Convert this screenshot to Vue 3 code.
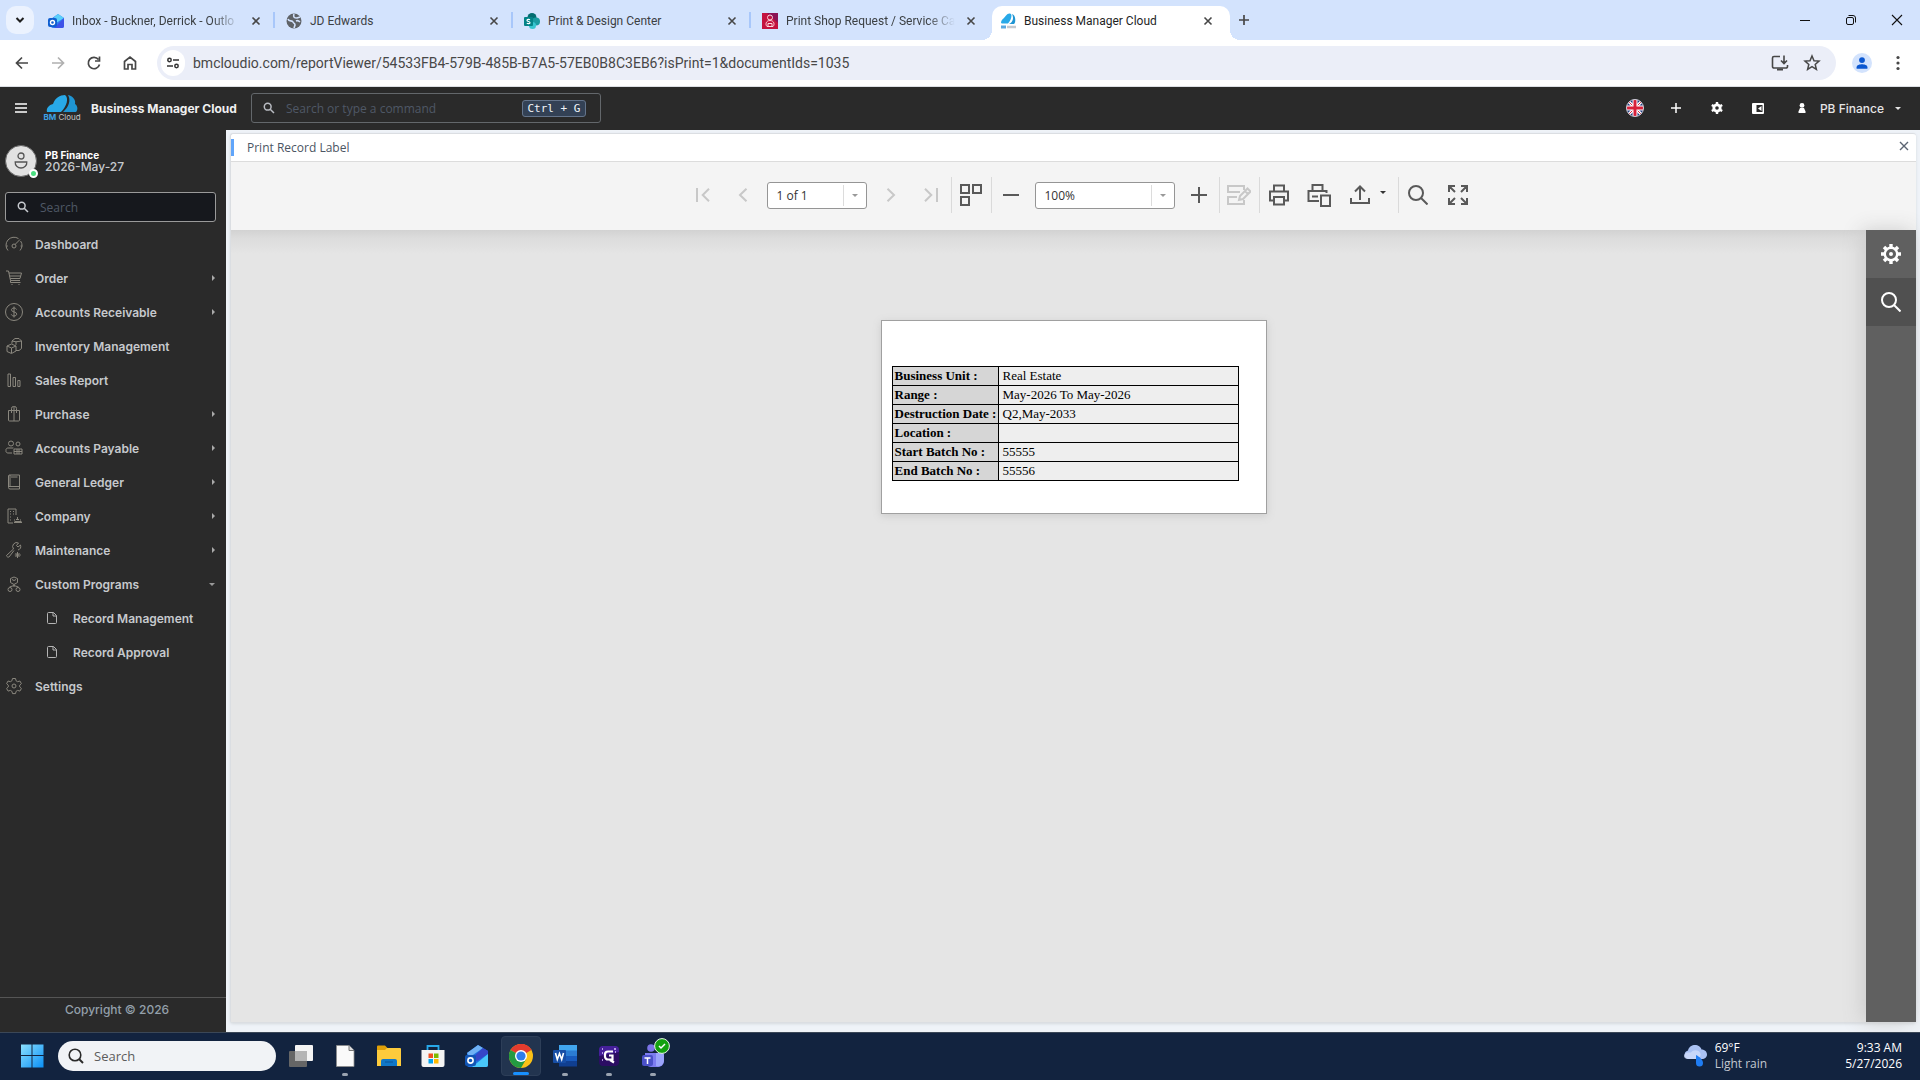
<!-- src/App.vue -->
<script setup>
import { ref } from 'vue'

const tabs = [
  { title: 'Inbox - Buckner, Derrick - Outlo', icon: 'outlook', long: true },
  { title: 'JD Edwards', icon: 'globe' },
  { title: 'Print & Design Center', icon: 'sharepoint' },
  { title: 'Print Shop Request / Service Ca', icon: 'shop', long: true },
  { title: 'Business Manager Cloud', icon: 'cloud', active: true },
]

const url = ref('bmcloudio.com/reportViewer/54533FB4-579B-485B-B7A5-57EB0B8C3EB6?isPrint=1&documentIds=1035')
const command = ref('')
const menuSearch = ref('')
const page = ref('1 of 1')
const zoom = ref('100%')
const taskSearch = ref('')
const customOpen = ref(true)

// menu icons are stroked on an 18x18 grid
const menu = [
  { name: 'Dashboard', d: 'M3 15.5A8 8 0 0 1 13.5 3.6M15.6 6A8 8 0 0 1 15 15.5M1.2 11h1.6M15.6 11h1.6M10 9.5L15 4.5M11 11a2 2 0 1 1-4 0a2 2 0 0 1 4 0' },
  { name: 'Order', arrow: true, d: 'M1 2h2.5l2 9.500h9.500M4 4h12.500l-1.500 5.500H5.200M4.500 7h11M5.500 11.500v2h10M6.500 15.500h1M13.500 15.500h1' },
  { name: 'Accounts Receivable', arrow: true, d: 'M17.500 9a8.500 8.500 0 1 1-17 0a8.500 8.500 0 0 1 17 0M11.500 6.500c-.4-1-1.300-1.500-2.500-1.500c-1.500 0-2.500.7-2.500 1.900c0 2.800 5.200 1.300 5.200 4.100c0 1.200-1 2-2.700 2c-1.400 0-2.400-.6-2.700-1.600M9 3.500v11' },
  { name: 'Inventory Management', d: 'M2 9l4.500-2L11 9v5l-4.500 2.500L2 14.500zM2 9l4.500 2L11 9M6.500 11v5M7 6.500V4l3-2.500h4L16.500 4v7.500L14 13.500h-3M7 4l4 .8L16.500 4M11 4.800v3' },
  { name: 'Sales Report', d: 'M3 3h2.500v12.500H3zM8 6.500h2.500v9H8zM12.800 9.500h2.200v6h-2.200z' },
  { name: 'Purchase', arrow: true, d: 'M3.500 5.500h11V15a1 1 0 0 1-1 1h-9a1 1 0 0 1-1-1zM6.500 8V3.500a2 2 0 0 1 2-2h1a2 2 0 0 1 2 2V8M9 1.500V16' },
  { name: 'Accounts Payable', arrow: true, d: 'M8.500 4.500a2.500 2.500 0 1 1-5 0a2.500 2.500 0 0 1 5 0M15 5a2 2 0 1 1-4 0a2 2 0 0 1 4 0M8.500 9H3a2 2 0 0 0-2 2.500A2 2 0 0 0 3 14h4M9 10h8v5H9zM12 10v5M14 10v5M9 12.500h8' },
  { name: 'General Ledger', arrow: true, d: 'M4 2h10.500v14H5a1.500 1.500 0 0 1-1.500-1.500V3zM6 4h6.500M3.500 13.500h11M5 2v11' },
  { name: 'Company', arrow: true, d: 'M8 16H3V2h8v6M5 4.500h1M8 4.500h1M5 7h1M8 7h1M5 10h1M5 13h1M12.500 10v2M9 13h1M15 13h1M11 12.500h3M9 15.500h8M9.500 14.500h7' },
  { name: 'Maintenance', arrow: true, d: 'M1.500 14.500L8.500 8a4 4 0 0 1 5-6l-2 2.500l1.500 1.500l2.500-2a4 4 0 0 1-2.500 5M9 9.500L4 16a1.800 1.800 0 0 1-2.500-1.500M12.500 11v6M9.800 14h6M10.500 12l4 4M14.500 12l-4 4' },
  { name: 'Custom Programs', open: true, d: 'M5.500 3.500L9 2l3.500 1.500v4L9 9.500L5.500 7.500zM7 4.500l2 1l2-1M9 9.500V12M4.500 12L9 10.500L13.500 12M7 14.500a2 2 0 1 1-4 0a2 2 0 0 1 4 0M15 14.500a2 2 0 1 1-4 0a2 2 0 0 1 4 0' },
]
const subMenu = ['Record Management', 'Record Approval']

const rows = [
  ['Business Unit :', 'Real Estate'],
  ['Range :', 'May-2026 To May-2026'],
  ['Destruction Date :', 'Q2,May-2033'],
  ['Location :', ''],
  ['Start Batch No :', '55555'],
  ['End Batch No :', '55556'],
]
</script>

<template>
  <div class="screen">
    <!-- Tab strip -->
    <header class="tab-strip">
      <button class="tab-search" aria-label="Search tabs">
        <svg width="10" height="10" viewBox="0 0 10 10"><path d="M1.500 3L5 6.500L8.500 3" fill="none" stroke="#1f1f1f" stroke-width="2" /></svg>
      </button>
      <div v-for="tab in tabs" :key="tab.title" class="tab" :class="{ active: tab.active }">
        <svg class="tab-icon" width="16" height="16" viewBox="0 0 16 16">
          <template v-if="tab.icon === 'outlook'">
            <path d="M3 6l7-5l6 4v8a2 2 0 0 1-2 2H5a2 2 0 0 1-2-2z" fill="#2f7df0" />
            <path d="M6 4l4-3l6 4l-8 5z" fill="#5bd0fb" /><path d="M16 5v8a2 2 0 0 1-2 2H6z" fill="#3d52e8" />
            <rect y="5" width="9" height="9" rx="2" fill="#0f5fd0" /><circle cx="4.500" cy="9.500" r="2" fill="none" stroke="#fff" stroke-width="1.400" />
          </template>
          <template v-else-if="tab.icon === 'globe'">
            <circle cx="8" cy="8" r="7.500" fill="#5f6368" />
            <path d="M2 6c1 3 4 1 5 3s2 1 2 3l-1 3M8 1c-1 3 0 4 3 4l3-1M10 8c2-1 3 0 4 1" fill="none" stroke="#d3e3fd" stroke-width="1.600" />
          </template>
          <template v-else-if="tab.icon === 'sharepoint'">
            <circle cx="8" cy="4.500" r="4.500" fill="#036c70" /><circle cx="12" cy="8.500" r="4" fill="#1a9ba1" /><circle cx="8.500" cy="12.500" r="3.500" fill="#37c6d0" />
            <rect y="4" width="9" height="9" rx="1" fill="#038387" />
            <path d="M6 6.800c-1-.7-3-.5-3 .6c0 1.400 3 .9 3 2.300c0 1.100-2 1.300-3.200.6" fill="none" stroke="#fff" stroke-width="1.200" />
          </template>
          <template v-else-if="tab.icon === 'shop'">
            <rect width="16" height="16" fill="#c4123f" /><path d="M5 0h11v10z" fill="#8b1254" />
            <g fill="none" stroke="#ffd5dc"><circle cx="8" cy="4.500" r="2.500" /><path d="M5 13.500c-2-2-1-6 3-6s5 4 3 6zM6 10.500h4v3H6z" /></g>
          </template>
          <template v-else>
            <path d="M1 10c0-3 2-4 3-5s3-5 6-4.500s1 7-2 10H2z" fill="#28a9e8" /><path d="M9 11c4-2 5-6 3-10c4 1 4 9 2 10z" fill="#1f95d3" />
            <path d="M1 14h5" stroke="#59a9e0" stroke-width="3" /><path d="M7 14h9" stroke="#c5c9ce" stroke-width="2.500" />
          </template>
        </svg>
        <span class="tab-title" :class="{ fade: tab.long }">{{ tab.title }}</span>
        <button class="tab-close" aria-label="Close tab">
          <svg width="10" height="10" viewBox="0 0 10 10"><path d="M1.500 1.500l7 7M8.500 1.500l-7 7" stroke="currentColor" stroke-width="1.600" /></svg>
        </button>
      </div>
      <button class="new-tab" aria-label="New tab">
        <svg width="12" height="12" viewBox="0 0 12 12"><path d="M6 1v10M1 6h10" stroke="#474747" stroke-width="1.700" /></svg>
      </button>
      <div class="window-buttons">
        <button aria-label="Minimize"><svg width="12" height="12" viewBox="0 0 12 12"><path d="M1 6.500h10" stroke="#111" /></svg></button>
        <button aria-label="Restore"><svg width="12" height="12" viewBox="0 0 12 12" fill="none" stroke="#111"><rect x="1.500" y="3.500" width="7" height="7" rx="1.500" /><path d="M3.500 1.500H8a2.500 2.500 0 0 1 2.500 2.500v4.500" /></svg></button>
        <button aria-label="Close"><svg width="12" height="12" viewBox="0 0 12 12"><path d="M1 1l10 10M11 1L1 11" stroke="#111" stroke-width="1.100" /></svg></button>
      </div>
    </header>

    <!-- Address bar -->
    <div class="address-row">
      <div class="nav-buttons">
        <button aria-label="Back"><svg width="16" height="16" viewBox="0 0 16 16"><path d="M14 8H2.500M8 2.500L2.500 8L8 13.500" /></svg></button>
        <button aria-label="Forward" class="off"><svg width="16" height="16" viewBox="0 0 16 16"><path d="M2 8h11.500M8 2.500L13.500 8L8 13.500" /></svg></button>
        <button aria-label="Reload"><svg width="16" height="16" viewBox="0 0 16 16"><path d="M13.500 9.500A5.700 5.700 0 1 1 12.500 4.500M13.500 1.500v4.500H9" /></svg></button>
        <button aria-label="Home"><svg width="16" height="16" viewBox="0 0 16 16"><path d="M2.500 14V6.500L8 2l5.500 4.500V14H10V9.500H6V14z" /></svg></button>
      </div>
      <div class="omnibox">
        <button class="site-info" aria-label="Site information">
          <svg width="14" height="14" viewBox="0 0 14 14" fill="none" stroke="#333" stroke-width="1.500"><circle cx="3.500" cy="4" r="1.700" /><path d="M7 4h6M1 10h6" /><circle cx="10.500" cy="10" r="1.700" /></svg>
        </button>
        <input v-model="url" class="url" type="text" aria-label="Address" />
        <button aria-label="Install"><svg width="18" height="18" viewBox="0 0 18 18" fill="none" stroke="#474747" stroke-width="1.600"><path d="M9 2.500H3a1.500 1.500 0 0 0-1.500 1.500v8.500A1.500 1.500 0 0 0 3 14h12a1.500 1.500 0 0 0 1.500-1.500V11M13 1.500v7.500M10 6.500l3 3l3-3" /><path d="M6 15.500h6" stroke-width="2" /></svg></button>
        <button aria-label="Bookmark"><svg width="18" height="18" viewBox="0 0 18 18" fill="none" stroke="#474747" stroke-width="1.500"><path d="M9 2l2 4.700l5 .4l-3.800 3.300l1.200 5L9 12.700l-4.400 2.700l1.200-5L2 7.100l5-.4z" /></svg></button>
      </div>
      <button class="profile" aria-label="Profile"><svg width="20" height="20" viewBox="0 0 24 24"><circle cx="12" cy="12" r="12" fill="#d3e3fd" /><circle cx="12" cy="8.500" r="3.500" fill="#0b57d0" /><path d="M5.500 19v-2c0-2.500 4-3.500 6.500-3.500s6.500 1 6.500 3.500v2z" fill="#0b57d0" /></svg></button>
      <button class="dots" aria-label="Menu"><svg width="4" height="16" viewBox="0 0 4 16" fill="#474747"><circle cx="2" cy="2.500" r="1.600" /><circle cx="2" cy="8" r="1.600" /><circle cx="2" cy="13.500" r="1.600" /></svg></button>
    </div>

    <!-- App header -->
    <div class="app-header">
      <button class="burger" aria-label="Toggle menu"><svg width="12" height="10" viewBox="0 0 12 10"><path d="M0 1h12M0 5h12M0 9h12" stroke="#fff" stroke-width="1.700" /></svg></button>
      <div class="logo">
        <svg width="32" height="18" viewBox="0 0 32 18"><path d="M1 17C0 13 3 10 7 9C9 3 14 0 19 0C23 3 21 11 15 17z" fill="#28a9e8" /><path d="M22 0c5 1 8 5 7 9c3 2 3 6 1 8H17C23 12 25 5 22 0z" fill="#1f95d3" /></svg>
        <span><b>BM</b> Cloud</span>
      </div>
      <strong class="brand">Business Manager Cloud</strong>
      <label class="command">
        <svg width="12" height="12" viewBox="0 0 12 12" fill="none" stroke="#b9bcc2" stroke-width="1.500"><circle cx="4.700" cy="4.700" r="3.400" /><path d="M7.200 7.200L11 11" /></svg>
        <input v-model="command" type="text" placeholder="Search or type a command" aria-label="Command" />
        <kbd>Ctrl + G</kbd>
      </label>
      <div class="header-actions">
        <button aria-label="Language">
          <svg width="18" height="18" viewBox="0 0 18 18">
            <defs><clipPath id="flagRound"><circle cx="9" cy="9" r="8.500" /></clipPath></defs>
            <g clip-path="url(#flagRound)"><rect width="18" height="18" fill="#233a80" /><path d="M0 0l18 18M18 0L0 18" stroke="#fff" stroke-width="3" /><path d="M0 0l18 18M18 0L0 18" stroke="#d22b40" stroke-width="1" /><path d="M9 0v18M0 9h18" stroke="#fff" stroke-width="5" /><path d="M9 0v18M0 9h18" stroke="#d8203a" stroke-width="3" /></g>
            <circle cx="9" cy="9" r="8.500" fill="none" stroke="#c9ccd6" />
          </svg>
        </button>
        <button aria-label="Add"><svg width="10" height="10" viewBox="0 0 10 10"><path d="M5 0v10M0 5h10" stroke="#fff" stroke-width="1.500" /></svg></button>
        <button aria-label="Settings"><svg width="12" height="12" viewBox="0 0 12 12"><circle cx="6" cy="6" r="3.200" fill="none" stroke="#fff" stroke-width="2.800" /><path d="M6 0v2.500M6 9.500V12M.8 3l2.200 1.300M9 7.700L11.200 9M.8 9L3 7.700M9 4.300L11.200 3" stroke="#fff" stroke-width="2.400" /></svg></button>
        <button aria-label="Panel"><svg width="12" height="11" viewBox="0 0 12 11"><rect width="12" height="11" rx="1" fill="#fff" /><rect x="4.500" y="2" width="6" height="7" fill="#2a2a2a" /><path d="M9.500 3v5L6 5.500z" fill="#fff" /></svg></button>
        <button class="user">
          <svg width="8" height="10" viewBox="0 0 8 10" fill="#fff"><circle cx="4" cy="2.400" r="2.400" /><path d="M.5 10V8.500L2 5h4l1.500 3.500V10z" /></svg>
          <span>PB Finance</span>
          <i class="caret-down"></i>
        </button>
      </div>
    </div>

    <div class="body">
      <!-- Side menu -->
      <aside class="sidebar">
        <div class="who">
          <div class="avatar">
            <svg width="14" height="18" viewBox="0 0 14 18" fill="none" stroke="#555" stroke-width="1.300"><circle cx="7" cy="4" r="3" /><path d="M1.200 10h11.600c.3 3.500-2.500 6-5.800 6s-6.100-2.500-5.800-6z" /></svg>
            <i class="online"></i>
          </div>
          <div class="who-text">
            <b>PB Finance</b>
            <span>2026-May-27</span>
          </div>
        </div>
        <label class="menu-search">
          <svg width="12" height="12" viewBox="0 0 12 12" fill="none" stroke="#c9ccd1" stroke-width="1.500"><circle cx="4.700" cy="4.700" r="3.400" /><path d="M7.200 7.200L11 11" /></svg>
          <input v-model="menuSearch" type="text" placeholder="Search" aria-label="Search menu" />
        </label>
        <nav>
          <a v-for="item in menu" :key="item.name" href="#" @click.prevent="item.open && (customOpen = !customOpen)">
            <svg class="menu-icon" width="18" height="18" viewBox="0 0 18 18"><path :d="item.d" /></svg>
            <span>{{ item.name }}</span>
            <i v-if="item.arrow" class="caret-right"></i>
            <i v-if="item.open" class="caret-down"></i>
          </a>
          <template v-if="customOpen">
            <a v-for="name in subMenu" :key="name" href="#" class="sub" @click.prevent>
              <svg width="10" height="12" viewBox="0 0 10 12" fill="none" stroke="#b5b5b5"><path d="M.5 1.500a1 1 0 0 1 1-1h5l3 3v7a1 1 0 0 1-1 1h-7a1 1 0 0 1-1-1zM6 .5v3.500h3.500" /></svg>
              <span>{{ name }}</span>
            </a>
          </template>
          <a href="#" @click.prevent>
            <svg class="menu-icon" width="18" height="18" viewBox="0 0 18 18"><path d="M7.500 1.500h3l.6 2.300l1.500.9l2.300-.7l1.500 2.600l-1.700 1.600v1.700l1.700 1.600l-1.500 2.600l-2.300-.7l-1.500.9l-.6 2.300h-3l-.6-2.300l-1.500-.9l-2.300.7l-1.500-2.600l1.700-1.600V8.200L1.600 6.600L3.100 4l2.300.7l1.500-.9zM11 9a2 2 0 1 1-4 0a2 2 0 0 1 4 0" /></svg>
            <span>Settings</span>
          </a>
        </nav>
        <footer>Copyright © 2026</footer>
      </aside>

      <!-- Report -->
      <main class="content">
        <section class="panel">
          <div class="panel-head">
            <h1>Print Record Label</h1>
            <button aria-label="Close"><svg width="10" height="10" viewBox="0 0 10 10"><path d="M1 1l8 8M9 1L1 9" stroke="#5b6472" stroke-width="1.400" /></svg></button>
          </div>

          <div class="toolbar">
            <button class="tool off" aria-label="First page"><svg width="14" height="14" viewBox="0 0 14 14"><path d="M1 0v14M13 .7L6.700 7L13 13.300" /></svg></button>
            <button class="tool off" aria-label="Previous page"><svg width="14" height="14" viewBox="0 0 14 14"><path d="M10.500 .7L4 7l6.500 6.300" /></svg></button>
            <div class="combo">
              <input v-model="page" type="text" aria-label="Page" />
              <button aria-label="Choose page"><i class="caret-down"></i></button>
            </div>
            <button class="tool off" aria-label="Next page"><svg width="14" height="14" viewBox="0 0 14 14"><path d="M3.500 .7L10 7l-6.500 6.300" /></svg></button>
            <button class="tool off" aria-label="Last page"><svg width="14" height="14" viewBox="0 0 14 14"><path d="M13 0v14M1 .7L7.300 7L1 13.300" /></svg></button>
            <i class="sep"></i>
            <button class="tool" aria-label="Multipage"><svg width="22" height="22" viewBox="0 0 22 22"><path d="M1 1h8v8H1zM13 1h8v8h-8zM1 13h8v8H1z" /></svg></button>
            <i class="sep"></i>
            <button class="tool" aria-label="Zoom out"><svg width="16" height="16" viewBox="0 0 16 16"><path d="M0 8h16" /></svg></button>
            <div class="combo wide">
              <input v-model="zoom" type="text" aria-label="Zoom" />
              <button aria-label="Choose zoom"><i class="caret-down"></i></button>
            </div>
            <button class="tool" aria-label="Zoom in"><svg width="16" height="16" viewBox="0 0 16 16"><path d="M0 8h16M8 0v16" /></svg></button>
            <i class="sep"></i>
            <button class="tool off" aria-label="Edit fields"><svg width="24" height="22" viewBox="0 0 24 22"><path d="M17 6V2H1v6h12M10 13H1v7h16v-4M12 16l1-4l7.500-7.500l3 3L16 15zM18 7l3 3" /></svg></button>
            <i class="sep"></i>
            <button class="tool" aria-label="Print"><svg width="20" height="22" viewBox="0 0 20 22"><path d="M5 6.500V1.500h10v5M5 16.500H1v-9h18v9h-4M5 13h10v7.500H5z" /></svg></button>
            <button class="tool" aria-label="Print page"><svg width="24" height="24" viewBox="0 0 24 24"><path d="M5.500 7V2h10v5M12 18H1.500V8h18v2M5 13.500h6M14 12.500h9V23h-9z" /></svg></button>
            <button class="tool export" aria-label="Export"><svg width="20" height="20" viewBox="0 0 20 20"><path d="M1 13v5h18v-5M10 15V1.500M5 6.500l5-5l5 5" /></svg><i class="caret-down"></i></button>
            <i class="sep"></i>
            <button class="tool" aria-label="Search"><svg width="20" height="20" viewBox="0 0 20 20"><circle cx="8" cy="8" r="7" /><path d="M13 13l6.500 6.500" /></svg></button>
            <button class="tool" aria-label="Full screen"><svg width="20" height="20" viewBox="0 0 20 20"><path d="M1 7V1h6M1 1l6 6M13 1h6v6M19 1l-6 6M1 13v6h6M1 19l6-6M19 13v6h-6M19 19l-6-6" /></svg></button>
          </div>

          <div class="viewer">
            <div class="sheet">
              <table>
                <tbody>
                  <tr v-for="row in rows" :key="row[0]">
                    <th scope="row">{{ row[0] }}</th>
                    <td>{{ row[1] }}</td>
                  </tr>
                </tbody>
              </table>
            </div>
            <div class="side-tabs">
              <button aria-label="Export options"><svg width="20" height="20" viewBox="0 0 20 20" fill="none" stroke="#fff"><circle cx="10" cy="10" r="6.200" stroke-width="2.400" /><circle cx="10" cy="10" r="1" fill="#fff" stroke-width="2" /><path d="M10 0v4M10 16v4M0 10h4M16 10h4M3 3l2.800 2.800M14.200 14.200L17 17M3 17l2.800-2.800M14.200 5.800L17 3" stroke-width="3.400" /></svg></button>
              <button class="dark" aria-label="Search in report"><svg width="20" height="20" viewBox="0 0 20 20" fill="none" stroke="#fff" stroke-width="2"><circle cx="8" cy="8" r="7" /><path d="M13 13l6.500 6.500" /></svg></button>
            </div>
          </div>
        </section>
      </main>
    </div>

    <!-- Taskbar -->
    <div class="taskbar">
      <button class="task start" aria-label="Start">
        <svg width="24" height="24" viewBox="0 0 24 24"><defs><linearGradient id="winBlue" x1="0" y1="0" x2="1" y2="1"><stop offset="0" stop-color="#8be0ff" /><stop offset="1" stop-color="#0a8ff5" /></linearGradient></defs><path d="M1 .5h10.500V11H1zM12.500 .5H23.500V11h-11zM1 12h10.500v11.500H1zM12.500 12h11v11.500h-11z" fill="url(#winBlue)" /></svg>
      </button>
      <label class="task-search">
        <svg width="16" height="16" viewBox="0 0 16 16" fill="none" stroke="#2a2a2a" stroke-width="1.600"><circle cx="7" cy="7" r="5.800" /><path d="M11 11l4 4" stroke-width="2" /></svg>
        <input v-model="taskSearch" type="text" placeholder="Search" aria-label="Windows search" />
      </label>
      <button class="task" aria-label="Task view">
        <svg width="24" height="24" viewBox="0 0 24 24"><rect x="6" y="1" width="18" height="16" rx="1" fill="#f4f4f4" /><rect y="7" width="18" height="16" rx="1" fill="#666" /><rect x="6" y="7" width="12" height="10" fill="#b4b4b4" /></svg>
      </button>
      <button class="task running" aria-label="Document">
        <svg width="24" height="24" viewBox="0 0 24 24"><path d="M3.500 1.500H16l5 5v16H3.500z" fill="#fafafa" stroke="#8d8d8d" stroke-width=".8" /><path d="M16 1.500v5h5" fill="#ddd" stroke="#777" /></svg>
      </button>
      <button class="task" aria-label="File Explorer">
        <svg width="24" height="24" viewBox="0 0 24 24"><path d="M0 2.500a1 1 0 0 1 1-1h7l3 3V10H0z" fill="#e0a008" /><path d="M0 6h8l2-2h13a1 1 0 0 1 1 1v17H0z" fill="#fdcb3c" /><path d="M4 22v-5a2 2 0 0 1 2-2h12a2 2 0 0 1 2 2v5z" fill="#1077c8" /><path d="M8 18h8" stroke="#0a5596" /></svg>
      </button>
      <button class="task" aria-label="Store">
        <svg width="24" height="24" viewBox="0 0 24 24"><path d="M6.500 7V2h11v5" fill="none" stroke="#27a9ea" stroke-width="1.800" /><path d="M.5 6h23v15a2 2 0 0 1-2 2h-19a2 2 0 0 1-2-2z" fill="#f4f4f4" /><path d="M7.500 9.500H12V14H7.500z" fill="#f25022" /><path d="M13 9.500h4.500V14H13z" fill="#7fba00" /><path d="M7.500 15H12v4.500H7.500z" fill="#00a4ef" /><path d="M13 15h4.500v4.500H13z" fill="#ffb900" /></svg>
      </button>
      <button class="task" aria-label="Outlook">
        <svg width="24" height="24" viewBox="0 0 24 24"><path d="M2 9L13 1l10 6v14a2 2 0 0 1-2 2H4a2 2 0 0 1-2-2z" fill="#1d6fe0" /><path d="M2 9L13 1l5 3L5 13z" fill="#6fb1f5" /><path d="M18 4l5 3v3l-11 7l-5-3z" fill="#3646c8" /><path d="M23 10v11a2 2 0 0 1-2 2H7z" fill="#48c7fa" /><rect x="0" y="11" width="11" height="11" rx="2" fill="#1155b5" /><circle cx="5.500" cy="16.500" r="2.600" fill="none" stroke="#fff" stroke-width="1.600" /></svg>
      </button>
      <button class="task current" aria-label="Chrome">
        <svg width="24" height="24" viewBox="0 0 24 24"><circle cx="12" cy="12" r="12" fill="#fbc116" /><path d="M12 12L1.600 6A12 12 0 0 1 22.400 6z" fill="#e33b2e" /><path d="M12 6h10.400A12 12 0 0 0 12 0z" fill="#e33b2e" /><path d="M1.600 6A12 12 0 0 0 12 24l5.200-9L12 12z" fill="#249a41" /><circle cx="12" cy="12" r="6" fill="#fff" /><circle cx="12" cy="12" r="4.600" fill="#2f7de9" /></svg>
      </button>
      <button class="task running" aria-label="Word">
        <svg width="24" height="24" viewBox="0 0 24 24"><rect x="6" y="1" width="18" height="6" fill="#41a5ee" /><rect x="6" y="6.500" width="18" height="6" fill="#2b7cd3" /><rect x="6" y="12" width="18" height="6" fill="#185abd" /><rect x="6" y="17" width="18" height="5.500" fill="#103f91" /><rect y="6" width="13" height="13" rx="1" fill="#174ea6" /><path d="M2.500 9l1.800 6.500L6.500 9.500l2.200 6L10.500 9" fill="none" stroke="#fff" stroke-width="1.600" /></svg>
      </button>
      <button class="task running" aria-label="Greenshot">
        <svg width="24" height="24" viewBox="0 0 24 24"><rect x="2" y="2" width="20" height="20" rx="4" fill="#2b0d63" /><path d="M2 12V6a4 4 0 0 1 4-4h12a4 4 0 0 1 4 4v2z" fill="#45209a" /><path d="M16 7.500H11a3 3 0 0 0-3 3v2a3 3 0 0 0 3 3h4.500v-4H12M13 16l4 2.500" fill="none" stroke="#fff" stroke-width="2.200" /><path d="M5 5h1M17 5h2M5 9h1M18 8h1M5 16h1" stroke="#d9c4ff" stroke-width="1.500" /></svg>
      </button>
      <button class="task running" aria-label="Teams">
        <svg width="24" height="24" viewBox="0 0 24 24"><circle cx="10" cy="4" r="3.800" fill="#7b74e8" /><path d="M4 9h17a2 2 0 0 1 2 2v6a6 6 0 0 1-6 6h-7a6 6 0 0 1-6-6z" fill="#7d7cf0" /><path d="M15 9h6a2 2 0 0 1 2 2v6a6 6 0 0 1-8 5z" fill="#9ba4fb" /><rect x="1" y="11" width="11" height="11" rx="2" fill="#4a50c8" /><path d="M3.500 14h6M6.500 14v6" stroke="#fff" stroke-width="1.500" /></svg>
        <svg class="badge" width="16" height="16" viewBox="0 0 16 16"><circle cx="8" cy="8" r="7.400" fill="#13a10e" stroke="#e9f5e9" stroke-width="1" /><path d="M5 8l2 2l4-4" fill="none" stroke="#fff" stroke-width="1.500" /></svg>
      </button>
      <div class="tray">
        <div class="weather">
          <svg width="24" height="24" viewBox="0 0 24 24"><path d="M5 15a5 4.500 0 0 1 0-8.500C6 2.500 9 1 12 1s6 2 6.500 4.500C22 5.500 24 8 24 10.500S22 15 19 15z" fill="#a9c1f3" /><path d="M8 8.500c2-3 7-3 9 0s-1 6.500-4 6.500H4c-4-1-4-5 0-6.500z" fill="#cfdcfa" opacity=".8" /><path d="M13 11c4 2 7 5 7 8a3.500 3.500 0 0 1-7 0z" fill="#1f7cf2" /></svg>
          <div><span>69°F</span><span class="dim">Light rain</span></div>
        </div>
        <div class="clock"><span>9:33 AM</span><span>5/27/2026</span></div>
      </div>
    </div>
  </div>
</template>

<style>
body { overflow: hidden; }
button { border: 0; padding: 0; background: none; font: inherit; color: inherit; cursor: pointer; display: flex; align-items: center; justify-content: center; }
input { border: 0; outline: 0; background: none; padding: 0; min-width: 0; font: inherit; color: inherit; }
</style>

<style scoped>
.screen { min-height: 100vh; display: flex; flex-direction: column; font-family: "Open Sans", "Noto Sans", sans-serif; font-size: 12px; color: #333; background: #f0f4f9; }
.screen * { box-sizing: border-box; }
svg { flex: none; display: block; }

/* browser tabs */
.tab-strip { display: flex; height: 40px; background: #d3e3fd; padding-left: 6px; font-family: Roboto, sans-serif; }
.tab-search { width: 28px; height: 28px; margin: 6px 6px 0 0; border-radius: 10px; background: #ebf2fe; }
.tab { position: relative; display: flex; align-items: center; width: 238px; height: 34px; margin-top: 6px; padding: 0 14px 5px 8px; gap: 8px; color: #3c4043; }
.tab::after { content: ""; position: absolute; right: 3px; top: 6px; width: 2px; height: 16px; background: #a8c7fa; }
.tab:nth-last-of-type(3)::after, .tab.active::after { display: none; }
.tab-title { flex: 1; white-space: nowrap; }
.tab-title.fade { mask-image: linear-gradient(90deg, #000 calc(100% - 28px), transparent); }
.tab-close { width: 16px; height: 16px; color: #474747; }
.tab.active { background: #fff; border-radius: 10px 10px 0 0; color: #1f1f1f; }
.tab.active::before { content: ""; position: absolute; left: -10px; right: -10px; bottom: 0; height: 10px; background: radial-gradient(circle at 0 0, transparent 10px, #fff 10px) left / 10px 10px no-repeat, radial-gradient(circle at 100% 0, transparent 10px, #fff 10px) right / 10px 10px no-repeat; }
.new-tab { width: 28px; height: 40px; }
.window-buttons { margin-left: auto; display: flex; }
.window-buttons button { width: 46px; height: 40px; }

/* address bar */
.address-row { display: flex; align-items: center; height: 47px; padding: 0 14px 1px 4px; background: #fff; border-bottom: 1px solid #dcdfe4; }
.nav-buttons { display: flex; margin-right: 9px; }
.nav-buttons button { width: 36px; height: 34px; }
.nav-buttons path { fill: none; stroke: #474747; stroke-width: 1.7; }
.nav-buttons .off path { stroke: #b0b0b0; }
.omnibox { flex: 1; display: flex; align-items: center; height: 34px; padding: 0 8px 0 4px; border-radius: 17px; background: #ebeef8; }
.omnibox button { width: 32px; height: 32px; }
.omnibox .site-info { width: 24px; height: 26px; border-radius: 13px; background: #fff; margin-right: 8px; }
.url { flex: 1; font-family: Roboto, sans-serif; font-size: 14px; color: #474747; }
.profile { margin-left: 16px; }
.dots { width: 16px; height: 28px; margin-left: 18px; }

/* app header */
.app-header { display: flex; align-items: center; height: 43px; padding: 0 19px 1px 15px; background: #2a2a2a; font-family: Inter, sans-serif; color: #e5e5e5; }
.logo { display: flex; flex-direction: column; align-items: center; width: 32px; margin: 0 13px 0 19px; }
.logo span { font-size: 8px; line-height: 8px; white-space: nowrap; color: #c8c8c8; }
.logo b { color: #3ea2e5; }
.brand { width: 147px; margin-right: 13px; font-size: 12px; font-weight: 700; white-space: nowrap; color: #f0f0f0; }
.command { display: flex; align-items: center; width: 350px; height: 30px; padding: 0 14px 0 11px; border: 1px solid #63676b; border-radius: 3px; }
.command input { flex: 1; margin-left: 11px; font-family: "Open Sans", sans-serif; font-size: 12px; }
.command input::placeholder { color: #4f5866; opacity: 1; }
.command kbd { width: 64px; height: 17px; border: 1px solid #64748b; border-radius: 3px; background: #334155; color: #f1f5f9; font: 11px/15px "DejaVu Sans Mono", monospace; text-align: center; white-space: nowrap; }
.header-actions { margin-left: auto; display: flex; align-items: center; gap: 23px; }
.header-actions button { min-width: 18px; height: 24px; }
.header-actions .user { gap: 14px; margin-left: 8px; font-size: 12px; font-weight: 500; }
.header-actions .user .caret-down { border-top-color: #e5e5e5; margin-left: -3px; }
.caret-down { border: 3px solid transparent; border-top: 3px solid #999; border-bottom: 0; }
.caret-right { border: 3px solid transparent; border-left: 3px solid #aaa; border-right: 0; }

.body { flex: 1; display: flex; }

/* side menu */
.sidebar { width: 226px; display: flex; flex-direction: column; background: #2a2a2a; font-family: Inter, sans-serif; color: #c6c9cd; }
.who { display: flex; align-items: center; gap: 8px; height: 62px; padding-left: 5px; }
.avatar { position: relative; display: flex; align-items: center; justify-content: center; width: 32px; height: 32px; border: 1px solid #666; border-radius: 50%; background: #e2e2e2; }
.online { position: absolute; right: -2px; bottom: -2px; width: 9px; height: 9px; border: 2px solid #fff; border-radius: 50%; background: #4ade80; }
.who-text { display: flex; flex-direction: column; }
.who-text b { font-size: 10px; line-height: 10px; color: #fff; }
.who-text span { font-size: 12px; line-height: 13px; font-weight: 500; }
.menu-search { display: flex; align-items: center; height: 30px; margin: 0 10px 5px 5px; padding-left: 11px; border: 1px solid #9a9a9a; border-radius: 3px; background: #16181d; }
.menu-search input { flex: 1; margin-left: 11px; font-family: "Open Sans", sans-serif; font-size: 12px; }
.menu-search input::placeholder { color: #4f5866; opacity: 1; }
nav { display: flex; flex-direction: column; }
nav a { display: flex; align-items: center; height: 34px; padding: 0 11px 0 5px; color: inherit; font-size: 12px; font-weight: 600; text-decoration: none; }
nav a span { flex: 1; margin-left: 12px; }
nav a.sub { padding-left: 47px; }
nav a.sub span { margin-left: 16px; }
.menu-icon path { fill: none; stroke: #8a877e; stroke-width: 1; }
.sidebar footer { margin-top: auto; height: 35px; padding: 4px 0 0 8px; border-top: 1px solid #555; font-size: 12px; line-height: 16px; font-weight: 500; text-align: center; color: #94a0ab; }

/* report panel */
.content { flex: 1; display: flex; padding: 3px 4px 9px; background: #eff3f8; }
.panel { flex: 1; display: flex; flex-direction: column; border: 1px solid #dbdee2; border-right: 0; border-radius: 3px; background: #fff; box-shadow: 0 1px 3px #d5d9de; }
.panel-head { display: flex; align-items: center; justify-content: space-between; height: 28px; padding: 0 7px 3px 0; border-bottom: 1px solid #dcdcdc; }
.panel-head h1 { margin: 2px 0 0; padding-left: 13px; border-left: 3px solid #60a5fa; font-size: 12px; line-height: 17px; font-weight: 400; color: #4b5563; }
.toolbar { display: flex; align-items: center; justify-content: center; height: 68px; padding: 0 0 2px 13px; background: #f4f4f4; }
.tool { width: 40px; height: 36px; color: #595959; }
.tool.off { color: #c8c8c8; }
.tool svg { fill: none; stroke: currentColor; stroke-width: 2; }
.tool.export { gap: 10px; width: 59px; }
.tool.export .caret-down { border-top-color: #333; margin-bottom: 5px; }
.sep { width: 1px; height: 36px; margin-right: -1px; background: #dadada; }
.combo { display: flex; width: 100px; height: 27px; margin: 0 4px; border: 1px solid #959595; border-radius: 3px; background: #fff; }
.combo.wide { width: 140px; }
.combo input { flex: 1; padding-left: 9px; }
.combo button { width: 23px; margin: 2px 0; border-left: 1px solid #dcdcdc; }
.viewer { flex: 1; display: grid; grid-template-columns: 1fr 386px 1fr; align-items: start; background: linear-gradient(#d2d2d2, #dcdcdc 8px, #e5e5e5 24px); }
.sheet { grid-column: 2; margin-top: 90px; height: 194px; padding: 45px 0 0 10px; border: 1px solid #a0a0a0; background: #fff; box-shadow: 0 2px 8px #ccc; }
.sheet table { width: 347px; border-collapse: collapse; font: 13px/18px "Liberation Serif", serif; color: #000; }
.sheet th, .sheet td { height: 19px; padding: 0 0 0 2px; border: 1px solid #000; text-align: left; white-space: nowrap; }
.sheet th { width: 106px; background: #d6d6d6; font-weight: 700; }
.sheet td { padding-left: 4px; background: #eee; }
.side-tabs { grid-column: 3; justify-self: end; align-self: stretch; width: 50px; background: #606060; box-shadow: -4px 0 20px #ccc; }
.side-tabs button { width: 50px; height: 48px; }
.side-tabs .dark { background: #505050; }

/* taskbar */
.taskbar { display: flex; align-items: center; height: 48px; padding: 0 18px 2px 12px; border-top: 1px solid #3b4757; background: #12233f; color: #fff; }
.task { position: relative; width: 40px; height: 40px; margin-right: 4px; border-radius: 4px; }
.task.start { margin-right: 6px; }
.task.running::after, .task.current::after { content: ""; position: absolute; bottom: 0; left: 17px; width: 6px; height: 3px; border-radius: 2px; background: #9aa3b0; }
.task.current { background: #22344f; border: 1px solid #2d3e58; }
.task.current::after { left: 11px; width: 16px; background: #1890ff; }
.badge { position: absolute; right: 3px; top: 2px; }
.task-search { display: flex; align-items: center; width: 218px; height: 30px; margin-right: 5px; padding-left: 10px; border-radius: 15px; background: #f1f3f6; color: #333; }
.task-search input { flex: 1; margin-left: 10px; font-size: 13px; }
.task-search input::placeholder { color: #5c5c5c; opacity: 1; }
.tray { margin-left: auto; display: flex; gap: 78px; font-size: 12px; line-height: 16px; }
.weather { display: flex; align-items: center; gap: 8px; }
.weather div, .clock { display: flex; flex-direction: column; }
.clock { align-items: flex-end; }
.dim { color: #c3c8d0; }
</style>
